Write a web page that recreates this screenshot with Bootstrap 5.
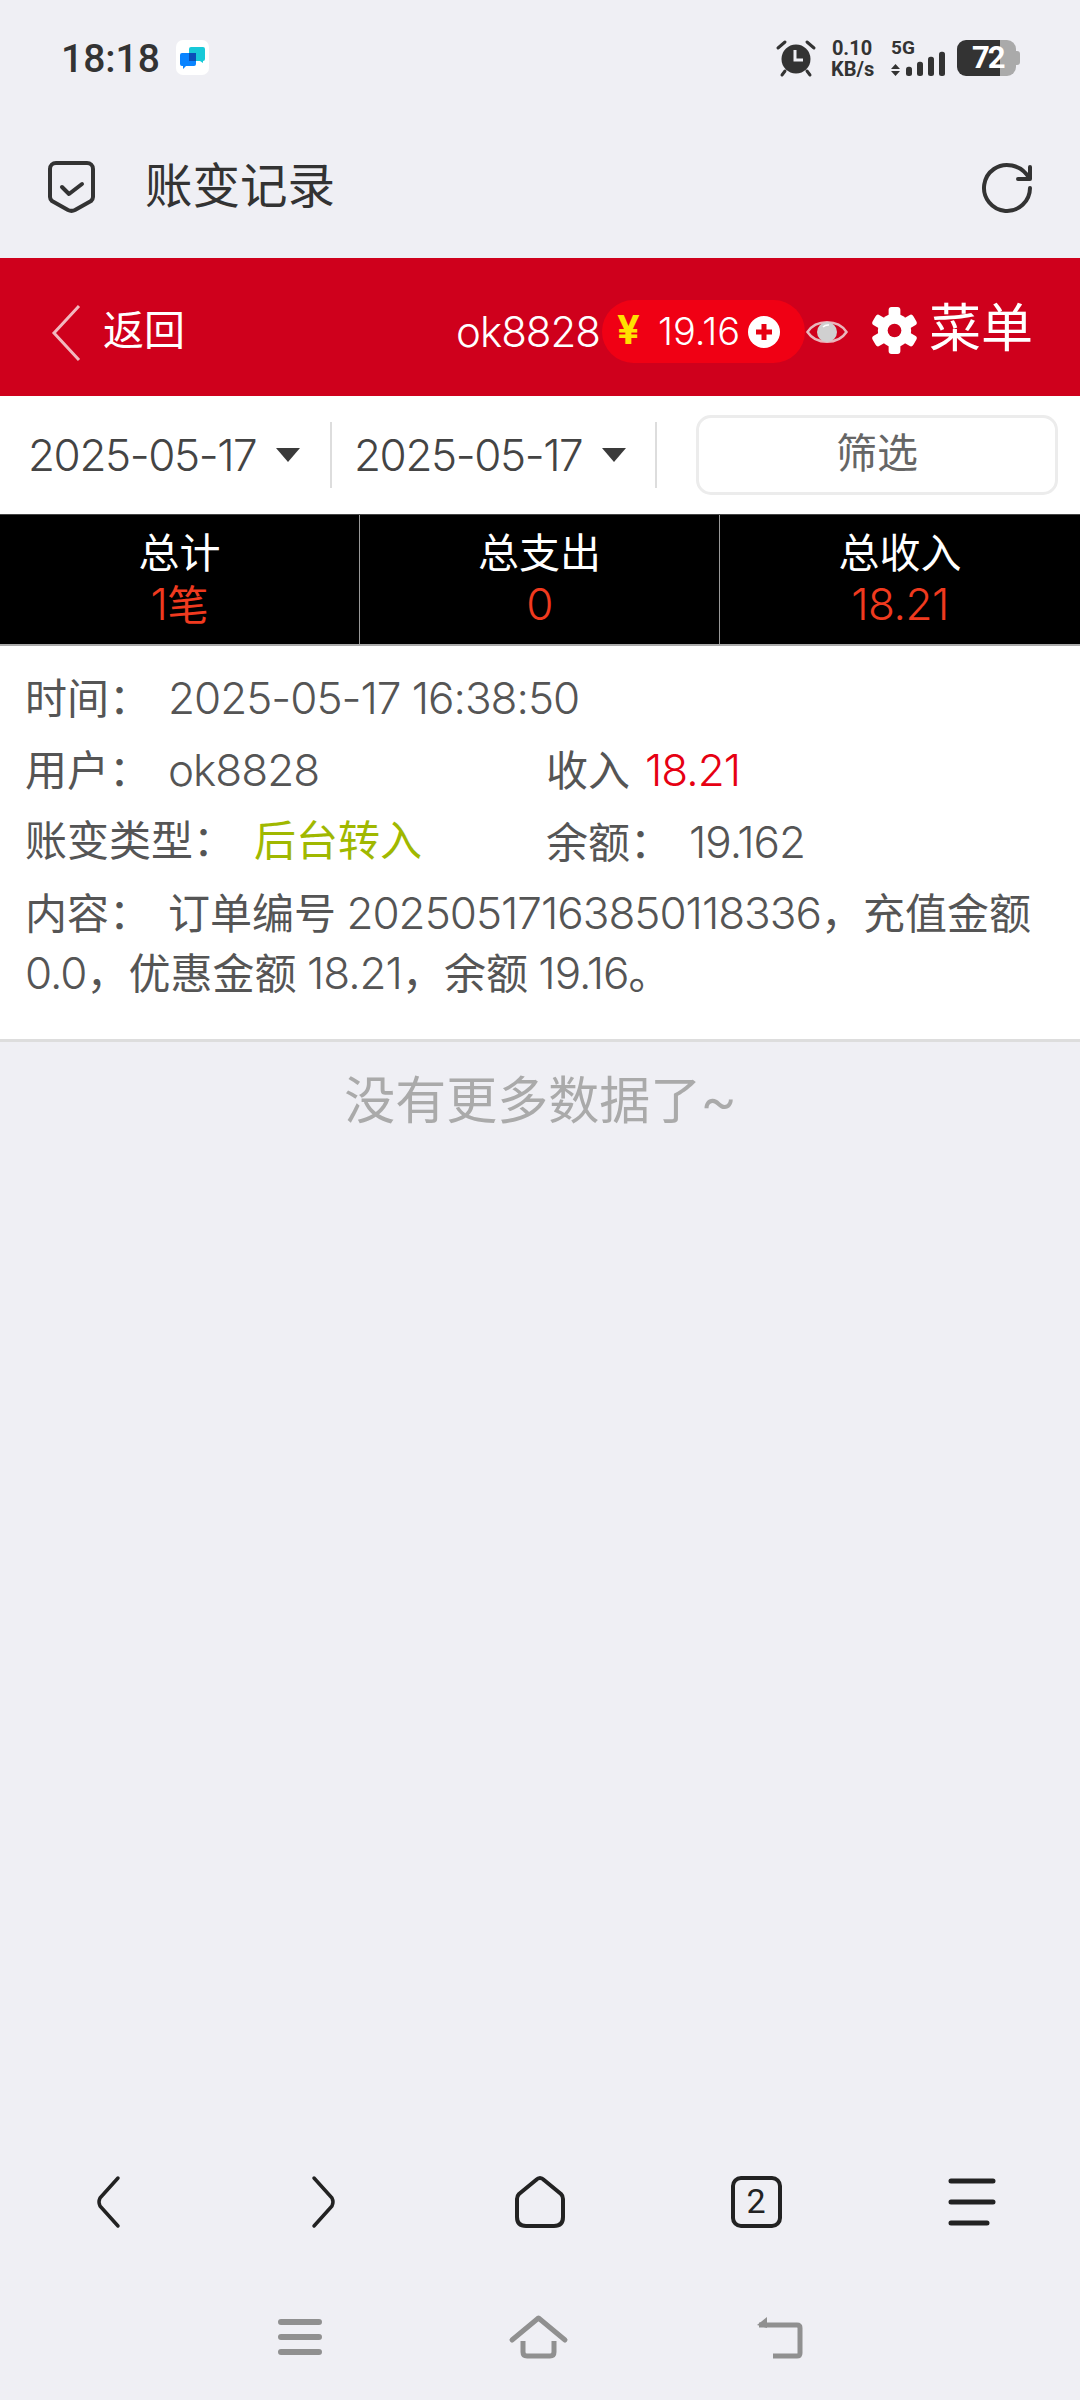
<!DOCTYPE html>
<html lang="zh-CN">
<head>
  <meta charset="UTF-8" />
  <meta name="viewport" content="width=device-width, initial-scale=1.0" />
  <title>账变记录</title>
  <link href="https://cdn.jsdelivr.net/npm/bootstrap@5.3.7/dist/css/bootstrap.min.css" rel="stylesheet" />
  <style>
    html, body { height: 2400px; overflow: hidden; }
    body {
      background: #efeff4;
      font-family: Roboto, "Noto Sans CJK SC", sans-serif;
      font-weight: 400;
      font-size: 42px;
      color: #555;
    }
    .screen { width: 1080px; height: 2400px; }
    svg { display: block; flex: none; overflow: visible; }
    .numText { font-family: Inter, Roboto, sans-serif; font-size: 44px; font-weight: 300; letter-spacing: -1px; }

    /* status bar */
    .statusBar { height: 116px; padding: 40px 60px 0 61px; color: #333; }
    .clockText { font-size: 39px; font-weight: 500; line-height: 38px; width: 115px; }
    .appTile { width: 33px; height: 35px; border-radius: 7px; background: #fff; }
    .netSpeed { width: 42px; margin: -2px 0 0 16px; font-size: 20px; font-weight: 700; line-height: 21px; text-align: center; white-space: nowrap; }
    .signalBox { width: 54px; margin-left: 18px; }
    .signalBox b { font-size: 19px; line-height: 16px; display: block; font-weight: 700; margin-bottom: 4px; }
    .batteryBox {
      width: 59px; height: 36px; margin-left: 12px; padding-left: 15px;
      border-radius: 9px; font-size: 31px; font-weight: 700; line-height: 36px; color: #fff; letter-spacing: -2px;
      background: linear-gradient(90deg, #333 43px, #aaa 43px);
    }
    .batteryNib { width: 4px; height: 14px; background: #aaa; border-radius: 0 3px 3px 0; margin-top: 11px; }

    /* browser title */
    .titleBar { height: 142px; padding: 0 48px; color: #333; }
    .titleText { font-size: 47.5px; margin: 2px 0 0 50px; font-weight: 400; }

    /* red header */
    .redBar { height: 138px; background: #cf001c; color: #fff; padding: 0 47px 0 52px; }
    .backText { font-size: 41px; margin: 10px 0 0 23px; }
    .userText { font-family: Inter, Roboto, sans-serif; font-size: 42px; font-weight: 300; letter-spacing: -1px; margin-top: 8px; }
    .moneyPill {
      width: 203px; height: 63px; background: #f00014; border-radius: 32px;
      padding-left: 15px; margin: 9px 0 0 2px; font-family: Inter, Roboto, sans-serif; font-size: 38px; font-weight: 300;
    }
    .yuanMark { color: #ffe100; font-weight: 700; font-size: 40px; width: 41px; line-height: 1; margin-top: -4px; }
    .eyeIcon { margin: 10px 0 0 1px; }
    .gearIcon { margin: 6px 0 0 23px; }
    .backIcon { margin-top: 10px; }
    .menuText { font-size: 52px; margin: 6px 0 0 11px; font-weight: 400; }

    /* filter row */
    .filterRow { height: 118px; background: #fff; }
    .dateBox { height: 66px; font-family: Inter, Roboto, sans-serif; font-size: 44px; font-weight: 300; letter-spacing: -1.4px; color: #444; border-right: 2px solid #ddd; }
    .dateBox span { width: 248px; }
    .dateBoxOne { width: 332px; padding-left: 28px; }
    .dateBoxTwo { width: 325px; padding-left: 22px; }
    .dateArrow { width: 0; height: 0; border: 12.5px solid transparent; border-top: 14px solid #3a3a3a; border-bottom: 0; }
    .filterBtn {
      width: 362px; height: 80px; margin-left: 39px; padding: 0;
      border: 3px solid #ececec; border-radius: 15px; background: #fff;
      font-size: 41px; color: #666;
    }

    /* totals */
    .totalsRow { height: 132px; background: #000; color: #fff; font-size: 41px; border-top: 1px solid #444; border-bottom: 2px solid #aaa; }
    .totalCell { line-height: 50px; padding-top: 14px; }
    .totalCell:not(:last-child) { border-right: 1px solid #999; }
    .totalValue { color: #f03a1f; }
    .totalValue .numText { letter-spacing: -.5px; }

    /* record */
    .recordBox { height: 396px; background: #fff; border-bottom: 3px solid #ddd; padding: 16px 25px 0; }
    .recordLine { height: 72px; line-height: 72px; white-space: nowrap; }
    .leftCell { width: 521px; }
    .keyText { margin-right: 17px; }
    .redValue { color: #e60012; margin-left: 15px; }
    .greenValue { color: #a0b800; margin-left: 19px; }
    .contentText { line-height: 59px; margin-top: 6px; }
    .noMoreText { font-size: 51px; color: #aaa; margin-top: 28px; line-height: 64px; }

    /* bottom bars */
    .browserNav { margin-top: auto; height: 52px; }
    .browserNav > div { width: 216px; }
    .tabCount { width: 51px; height: 52px; border: 4px solid #222; border-radius: 10px; font-size: 34px; line-height: 43px; color: #222; font-weight: 400; }
    .systemNav { height: 42px; margin: 88px 0 42px; gap: 188px; }
  </style>
</head>
<body>
  <div class="screen d-flex flex-column">

    <div class="statusBar d-flex align-items-start">
      <div class="clockText">18:18</div>
      <div class="appTile d-flex align-items-center justify-content-center">
        <svg width="25" height="22" viewBox="0 0 25 22">
          <path d="M9 2a2 2 0 0 1 2-2h12a2 2 0 0 1 2 2v10a2 2 0 0 1-2 2v2l-3-2H9z" fill="#17c9d8"/>
          <path d="M0 8a2 2 0 0 1 2-2h12a2 2 0 0 1 2 2v9a2 2 0 0 1-2 2H6l-3 3v-3H2a2 2 0 0 1-2-2z" fill="#0a84ff"/>
          <path d="M9 6h7v8H9z" fill="#0b4fb8"/>
        </svg>
      </div>
      <div class="ms-auto d-flex align-items-start">
        <svg width="38" height="36" viewBox="0 0 38 36" fill="#333">
          <circle cx="19" cy="19" r="14.5"/>
          <path d="M1 8l7-6M37 8l-7-6M8 31l-3 4M30 31l3 4" stroke="#333" stroke-width="3" stroke-linecap="round" fill="none"/>
          <path d="M18 10v10h8" stroke="#efeff4" stroke-width="3" fill="none"/>
        </svg>
        <div class="netSpeed">0.10<br />KB/s</div>
        <div class="signalBox">
          <b>5G</b>
          <svg width="54" height="16" viewBox="0 0 54 16" fill="#333">
            <path d="M0 9l4.500-5 4.500 5zM0 11h9l-4.500 5z"/>
            <rect x="15" y="6.700" width="6" height="9.300" rx="2.500"/>
            <rect x="26" y="1.700" width="6" height="14.300" rx="2.500"/>
            <rect x="37" y="-3.300" width="6" height="19.300" rx="2.500"/>
            <rect x="48" y="-8.300" width="6" height="24.300" rx="2.500"/>
          </svg>
        </div>
        <div class="batteryBox">72</div>
        <div class="batteryNib"></div>
      </div>
    </div>

    <div class="titleBar d-flex align-items-center">
      <svg width="47" height="52" viewBox="0 0 47 52" fill="none" stroke="#333" stroke-width="4" stroke-linecap="round" stroke-linejoin="round">
        <path d="M8 2h31a6 6 0 0 1 6 6v28c0 2-1 3-2 4L27 49c-2 1-5 1-7 0L4 40c-1-1-2-2-2-4V8a6 6 0 0 1 6-6z"/>
        <path d="M14 26l7 7 13-10"/>
      </svg>
      <div class="titleText">账变记录</div>
      <svg class="ms-auto" width="52" height="50" viewBox="0 0 52 50" fill="none" stroke="#333" stroke-width="4" stroke-linecap="round" stroke-linejoin="round">
        <path d="M50 26A23 23 0 1 1 32 3.500C39 5 45 9 49 16"/>
        <path d="M50 5v12H38"/>
      </svg>
    </div>

    <div class="redBar d-flex align-items-center">
      <svg class="backIcon" width="28" height="55" viewBox="0 0 28 55" fill="none" stroke="#f2b8bf" stroke-width="3">
        <path d="M27 1L2 28l25 27"/>
      </svg>
      <div class="backText">返回</div>
      <div class="userText ms-auto">ok8828</div>
      <div class="moneyPill d-flex align-items-center">
        <span class="yuanMark">¥</span>
        <span>19.16</span>
        <svg class="ms-2" width="32" height="32" viewBox="0 0 32 32">
          <circle cx="16" cy="16" r="16" fill="#fff"/>
          <path d="M16 8v16M8 16h16" stroke="#e60012" stroke-width="5"/>
        </svg>
      </div>
      <svg class="eyeIcon" width="42" height="28" viewBox="0 0 42 28" fill="none">
        <path d="M1.500 14C10 1 32 1 40.500 14C32 27 10 27 1.500 14z" stroke="#eab6bc" stroke-width="2.500"/>
        <circle cx="21" cy="14" r="10" fill="#d0d0d0"/>
        <path d="M17 9a7 7 0 0 1 6-2" stroke="#fff" stroke-width="1.500"/>
      </svg>
      <svg class="gearIcon" width="47" height="47" viewBox="0 0 48 48" fill="#fff">
        <rect x="18" y="0" width="12" height="48" rx="3"/>
        <rect x="18" y="0" width="12" height="48" rx="3" transform="rotate(60 24 24)"/>
        <rect x="18" y="0" width="12" height="48" rx="3" transform="rotate(120 24 24)"/>
        <circle cx="24" cy="24" r="17"/>
        <circle cx="24" cy="24" r="7" fill="#cf001c"/>
      </svg>
      <div class="menuText">菜单</div>
    </div>

    <div class="filterRow d-flex align-items-center">
      <div class="dateBox dateBoxOne d-flex align-items-center"><span>2025-05-17</span><i class="dateArrow"></i></div>
      <div class="dateBox dateBoxTwo d-flex align-items-center"><span>2025-05-17</span><i class="dateArrow"></i></div>
      <button type="button" class="btn filterBtn">筛选</button>
    </div>

    <div class="totalsRow row g-0 text-center">
      <div class="col-4 totalCell">总计<div class="totalValue"><span class="numText">1</span>笔</div></div>
      <div class="col-4 totalCell">总支出<div class="totalValue"><span class="numText">0</span></div></div>
      <div class="col-4 totalCell">总收入<div class="totalValue"><span class="numText">18.21</span></div></div>
    </div>

    <div class="recordBox">
      <div class="recordLine"><span class="keyText">时间：</span><span class="numText">2025-05-17 16:38:50</span></div>
      <div class="recordLine d-flex">
        <div class="leftCell"><span class="keyText">用户：</span><span class="numText">ok8828</span></div>
        <div>收入<span class="redValue numText">18.21</span></div>
      </div>
      <div class="recordLine d-flex">
        <div class="leftCell">账变类型：<span class="greenValue">后台转入</span></div>
        <div><span class="keyText">余额：</span><span class="numText">19.162</span></div>
      </div>
      <div class="contentText"><span class="keyText">内容：</span>订单编号 <span class="numText">20250517163850118336</span>，充值金额 <span class="numText">0.0</span>，优惠金额 <span class="numText">18.21</span>，余额 <span class="numText">19.16</span>。</div>
    </div>

    <div class="noMoreText text-center">没有更多数据了~</div>

    <div class="browserNav d-flex">
      <div class="d-flex justify-content-center">
        <svg width="24" height="52" viewBox="0 0 24 52" fill="none" stroke="#222" stroke-width="3.500" stroke-linecap="round" stroke-linejoin="round">
          <path d="M22 2L4 22q-2 4 0 8l18 20"/>
        </svg>
      </div>
      <div class="d-flex justify-content-center">
        <svg width="24" height="52" viewBox="0 0 24 52" fill="none" stroke="#222" stroke-width="3.500" stroke-linecap="round" stroke-linejoin="round">
          <path d="M2 2l18 20q2 4 0 8L2 50"/>
        </svg>
      </div>
      <div class="d-flex justify-content-center">
        <svg width="50" height="52" viewBox="0 0 50 52" fill="none" stroke="#222" stroke-width="4" stroke-linejoin="round">
          <path d="M21 4q4-4 8 0l17 14q2 2 2 5v18q0 9-9 9H11q-9 0-9-9V23q0-3 2-5z"/>
        </svg>
      </div>
      <div class="d-flex justify-content-center">
        <div class="tabCount text-center">2</div>
      </div>
      <div class="d-flex justify-content-center">
        <svg width="48" height="52" viewBox="0 0 48 52" stroke="#222" stroke-width="5" stroke-linecap="round">
          <path d="M3 5h42M3 26h42M3 47h36"/>
        </svg>
      </div>
    </div>

    <div class="systemNav d-flex justify-content-center align-items-center">
      <svg width="44" height="36" viewBox="0 0 44 36" stroke="#909090" stroke-width="6" stroke-linecap="round">
        <path d="M3 3h38M3 18h38M3 33h38"/>
      </svg>
      <svg width="57" height="42" viewBox="0 0 57 42" fill="none" stroke="#909090" stroke-width="5" stroke-linejoin="round">
        <path d="M2 24L28.500 2 55 24" stroke-linecap="round"/>
        <path d="M13 25v11q0 4 4 4h23q4 0 4-4V25"/>
      </svg>
      <svg width="47" height="42" viewBox="0 0 47 42" fill="none" stroke="#909090" stroke-width="5">
        <path d="M4 9h38q3 0 3 3v25q0 3-3 3H18"/>
        <path d="M12 1L2 9l10 3z" fill="#909090" stroke="none"/>
      </svg>
    </div>
  </div>
  <script src="https://cdn.jsdelivr.net/npm/bootstrap@5.3.7/dist/js/bootstrap.bundle.min.js"></script>
</body>
</html>
